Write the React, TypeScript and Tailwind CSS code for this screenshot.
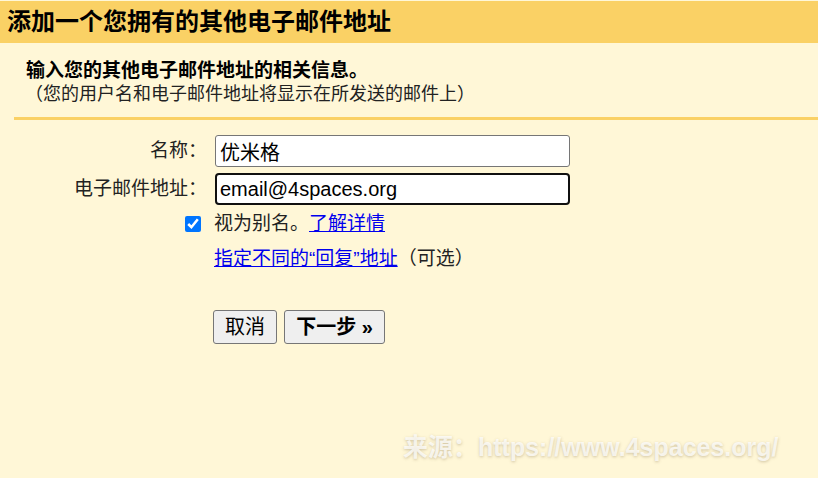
import React, { useState } from 'react';

export default function App() {
  const [name, setName] = useState('优米格');
  const [email, setEmail] = useState('email@4spaces.org');
  const [alias, setAlias] = useState(true);

  return (
    <div
      className="relative w-[818px] h-[478px] overflow-hidden bg-[#fff7d7] pt-px text-[#222]"
      style={{ fontFamily: '"Liberation Sans", "Noto Sans CJK SC", sans-serif' }}
    >
      <div className="h-[42px] bg-[#fad165] pl-[7px] flex items-center text-[24px] font-bold text-black">
        添加一个您拥有的其他电子邮件地址
      </div>

      <div className="pl-[26px] pt-[16px]">
        <div className="text-[19px] leading-[24px] font-bold text-black">输入您的其他电子邮件地址的相关信息。</div>
        <div className="text-[18px] leading-[23px] -ml-[1px]">（您的用户名和电子邮件地址将显示在所发送的邮件上）</div>
      </div>

      <div className="ml-[14px] mt-[11px] h-[3px] bg-[#fad165]" />

      <div className="mt-[15px] flex flex-col">
        <div className="flex items-center">
          <label className="w-[207px] text-right text-[19px]">名称：</label>
          <input
            value={name}
            onChange={e => setName(e.target.value)}
            className="ml-[8px] w-[355px] h-[32px] rounded-[3px] border border-[#767676] bg-white pl-[4px] text-[20px] text-black outline-none"
          />
        </div>
        <div className="mt-[6px] flex items-center">
          <label className="w-[207px] text-right text-[19px]">电子邮件地址：</label>
          <input
            value={email}
            onChange={e => setEmail(e.target.value)}
            className="ml-[8px] w-[355px] h-[32px] rounded-[4px] border-2 border-[#101010] bg-white pl-[3px] text-[20px] text-black outline-none"
          />
        </div>

        <div className="mt-[11px] ml-[185px] flex items-center h-[16px]">
          <input
            type="checkbox"
            checked={alias}
            onChange={() => setAlias(!alias)}
            className="w-4 h-4 m-0 accent-[#0075ff]"
          />
          <span className="ml-[13px] text-[19px] leading-[24px]">
            视为别名。<a href="#" className="text-[#0000ee] underline">了解详情</a>
          </span>
        </div>

        <div className="mt-[15px] ml-[214px] text-[19px] leading-[24px]">
          <a href="#" className="text-[#0000ee] underline">指定不同的“回复”地址</a>
          <span>（可选）</span>
        </div>

        <div className="mt-[39px] ml-[213px] flex gap-[7px]">
          <button className="w-[64px] h-[34px] rounded-[3px] border border-[#767676] bg-[#efefef] text-[20px] text-black">
            取消
          </button>
          <button className="w-[101px] h-[34px] rounded-[3px] border border-[#767676] bg-[#efefef] text-[20px] font-bold text-black">
            下一步 »
          </button>
        </div>
      </div>

      <div className="absolute left-[403px] top-[429px] text-[25px] font-bold text-white/75 [text-shadow:0_1px_3px_rgba(120,100,60,0.35)]">
        来源：https://www.4spaces.org/
      </div>
    </div>
  );
}
